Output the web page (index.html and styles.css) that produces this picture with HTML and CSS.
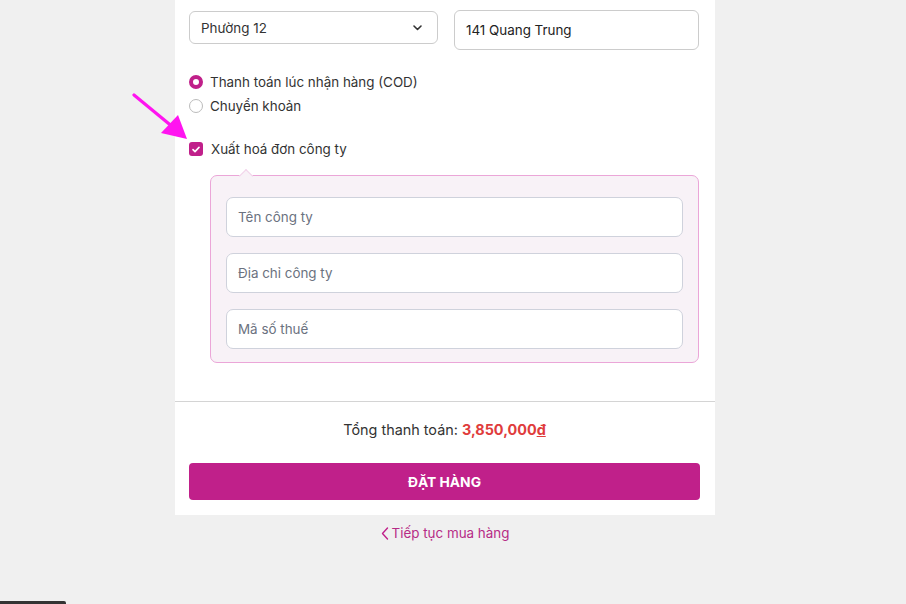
FILE: index.html
```html
<!DOCTYPE html>
<html lang="vi">
<head>
<meta charset="utf-8">
<title>Thanh toán</title>
<link rel="stylesheet" href="styles.css">
</head>
<body>
<div class="card">
  <div class="form">
    <div class="addr-row">
      <div class="select">
        <span>Phường 12</span>
        <svg class="chev" width="9" height="6" viewBox="0 0 9 6"><path d="M1 1l3.5 3.5L8 1" fill="none" stroke="#333" stroke-width="1.6" stroke-linecap="round" stroke-linejoin="round"/></svg>
      </div>
      <div class="input">141 Quang Trung</div>
    </div>
    <div class="radios">
      <label class="radio-row"><span class="radio on"></span>Thanh toán lúc nhận hàng (COD)</label>
      <label class="radio-row"><span class="radio"></span>Chuyển khoản</label>
    </div>
    <label class="check-row"><span class="check"><svg width="8" height="7" viewBox="0 0 8 7"><path d="M1 3.6l2 2L7 1.4" fill="none" stroke="#fff" stroke-width="1.6" stroke-linecap="round" stroke-linejoin="round"/></svg></span>Xuất hoá đơn công ty</label>
    <div class="company">
      <div class="field">Tên công ty</div>
      <div class="field">Địa chỉ công ty</div>
      <div class="field">Mã số thuế</div>
    </div>
  </div>
  <div class="summary">
    <div class="total">Tổng thanh toán: <strong>3,850,000<u>đ</u></strong></div>
    <button class="order">ĐẶT HÀNG</button>
  </div>
</div>
<a class="back" href="#"><svg width="8" height="13" viewBox="0 0 8 13"><path d="M6.5 1L1.5 6.5 6.5 12" fill="none" stroke="#c0208a" stroke-width="1.4" stroke-linecap="round" stroke-linejoin="round"/></svg>Tiếp tục mua hàng</a>
<svg class="arrow" width="60" height="50" viewBox="0 0 60 50"><line x1="2" y1="2" x2="42" y2="35" stroke="#ff14f0" stroke-width="3.2" stroke-linecap="round"/><polygon points="55,46 29,40 46,22" fill="#ff14f0"/></svg>
<div class="tab"></div>
</body>
</html>
```
FILE: styles.css
```css
* { box-sizing: border-box; }
html, body { margin: 0; height: 100%; }
body {
  background: #f0f0f0;
  font-family: Inter, "Noto Sans", "Liberation Sans", sans-serif;
  font-size: 13.4px;
  color: #333;
  position: relative;
  overflow: hidden;
  padding-right: 16px;
}
.card {
  width: 540px;
  margin: 0 auto;
  background: #fff;
}
.form {
  padding: 10px 16px 38px 14px;
  border-bottom: 1px solid #d4d4d4;
}
.addr-row {
  display: flex;
  align-items: flex-start;
  gap: 16px;
}
.select {
  flex: 1;
  height: 33px;
  margin-top: 1px;
  border: 1px solid #ccc;
  border-radius: 6px;
  display: flex;
  align-items: center;
  justify-content: space-between;
  padding: 0 15px 0 11px;
  color: #333;
}
.input {
  flex: 1;
  height: 40px;
  border: 1px solid #ccc;
  border-radius: 6px;
  display: flex;
  align-items: center;
  padding: 0 11px;
  color: #222;
}
.radios {
  margin-top: 20px;
  display: flex;
  flex-direction: column;
}
.radio-row, .check-row {
  display: flex;
  align-items: center;
  height: 24px;
  gap: 7px;
  color: #333;
}
.radio {
  width: 14px;
  height: 14px;
  border-radius: 50%;
  border: 1px solid #bbb;
  background: #fff;
  flex: none;
}
.radio.on {
  border: 4.5px solid #c0208a;
}
.check-row { margin-top: 19px; gap: 8px; }
.check {
  width: 14px;
  height: 14px;
  border-radius: 3px;
  background: #c0208a;
  display: flex;
  align-items: center;
  justify-content: center;
  flex: none;
}
.company {
  position: relative;
  margin: 14px 0 0 21px;
  background: #f8f2f7;
  border: 1px solid #eba6d8;
  border-radius: 7px;
  padding: 21px 15px 13px;
  display: flex;
  flex-direction: column;
  gap: 16px;
}
.company::before {
  content: "";
  position: absolute;
  top: -5px;
  left: 30px;
  width: 9px;
  height: 9px;
  background: #f8f2f7;
  border-top: 1px solid #f3d2ea;
  border-left: 1px solid #f3d2ea;
  transform: rotate(45deg);
}
.field {
  height: 40px;
  background: #fff;
  border: 1px solid #cfd2dc;
  border-radius: 7px;
  display: flex;
  align-items: center;
  padding: 0 11px;
  color: #6b7280;
}
.summary {
  padding: 18px 15px 15px 14px;
}
.total {
  text-align: center;
  font-size: 14.4px;
  line-height: 20px;
  color: #333;
}
.total strong { color: #e03c3c; font-weight: 700; }
.order {
  display: block;
  width: 100%;
  margin-top: 23px;
  height: 37px;
  border: none;
  border-radius: 4px;
  background: #c0208a;
  color: #fff;
  font-family: inherit;
  font-size: 13.8px;
  font-weight: 700;
}
.back {
  display: flex;
  justify-content: center;
  align-items: center;
  gap: 3px;
  margin-top: 8px;
  height: 20px;
  color: #b62b86;
  text-decoration: none;
  font-size: 13.4px;
}
.arrow {
  position: absolute;
  left: 132px;
  top: 93px;
}
.tab {
  position: absolute;
  left: 0;
  bottom: 0;
  width: 66px;
  height: 3px;
  background: #333;
  border-top-right-radius: 2px;
}
```
